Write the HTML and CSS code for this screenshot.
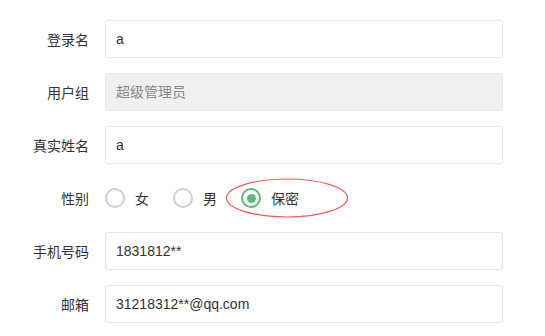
FILE: index.html
```html
<!DOCTYPE html>
<html lang="zh-CN">

<head>
   <meta charset="UTF-8">
   <meta name="viewport" content="width=device-width, initial-scale=1.0">
   <title>用户信息</title>
   <link rel="stylesheet" href="styles.css">
</head>

<body>
   <form class="user-form">
      <div class="form-item">
         <label class="form-label">登录名</label>
         <div class="form-input">a</div>
      </div>
      <div class="form-item">
         <label class="form-label">用户组</label>
         <div class="form-input disabled">超级管理员</div>
      </div>
      <div class="form-item">
         <label class="form-label">真实姓名</label>
         <div class="form-input">a</div>
      </div>
      <div class="form-item">
         <label class="form-label">性别</label>
         <div class="radio-group">
            <span class="radio"><i class="radio-icon"></i>女</span>
            <span class="radio"><i class="radio-icon"></i>男</span>
            <span class="radio checked"><i class="radio-icon"></i>保密</span>
            <svg class="mark" width="124" height="42" viewBox="0 0 124 42">
               <ellipse cx="62" cy="21" rx="60.5" ry="19" fill="none" stroke="#f25a5a" stroke-width="1.2"/>
            </svg>
         </div>
      </div>
      <div class="form-item">
         <label class="form-label">手机号码</label>
         <div class="form-input">1831812**</div>
      </div>
      <div class="form-item">
         <label class="form-label">邮箱</label>
         <div class="form-input">31218312**@qq.com</div>
      </div>
   </form>
</body>

</html>
```

FILE: styles.css
```css
* {
   box-sizing: border-box;
}

body {
   margin: 0;
   background-color: #fff;
   color: #333;
   font: 14px "Liberation Sans", "Noto Sans CJK SC", sans-serif;
}

.user-form {
   padding-top: 20px;
}

.form-item {
   display: flex;
   align-items: center;
   height: 38px;
   margin-bottom: 15px;
}

.form-label {
   width: 89px;
   margin-right: 16px;
   text-align: right;
   color: #333;
}

.form-input {
   width: 398px;
   height: 38px;
   line-height: 36px;
   padding-left: 10px;
   border: 1px solid #e6e6e6;
   border-radius: 2px;
   background-color: #fff;
   font-size: 14px;
}

.form-input.disabled {
   background-color: #f0f0f0;
   color: #888;
}

.radio-group {
   position: relative;
   display: flex;
   align-items: center;
   gap: 24px;
   height: 38px;
}

.radio {
   display: flex;
   align-items: center;
   gap: 10px;
}

.radio-icon {
   display: inline-block;
   width: 20px;
   height: 20px;
   border: 2px solid #cfcfcf;
   border-radius: 50%;
   position: relative;
}

.radio.checked .radio-icon {
   border-color: #5fb878;
}

.radio.checked .radio-icon::after {
   content: "";
   position: absolute;
   left: 3.5px;
   top: 3.5px;
   width: 9px;
   height: 9px;
   border-radius: 50%;
   background-color: #5fb878;
}

.mark {
   position: absolute;
   left: 120px;
   top: -2px;
}
```
